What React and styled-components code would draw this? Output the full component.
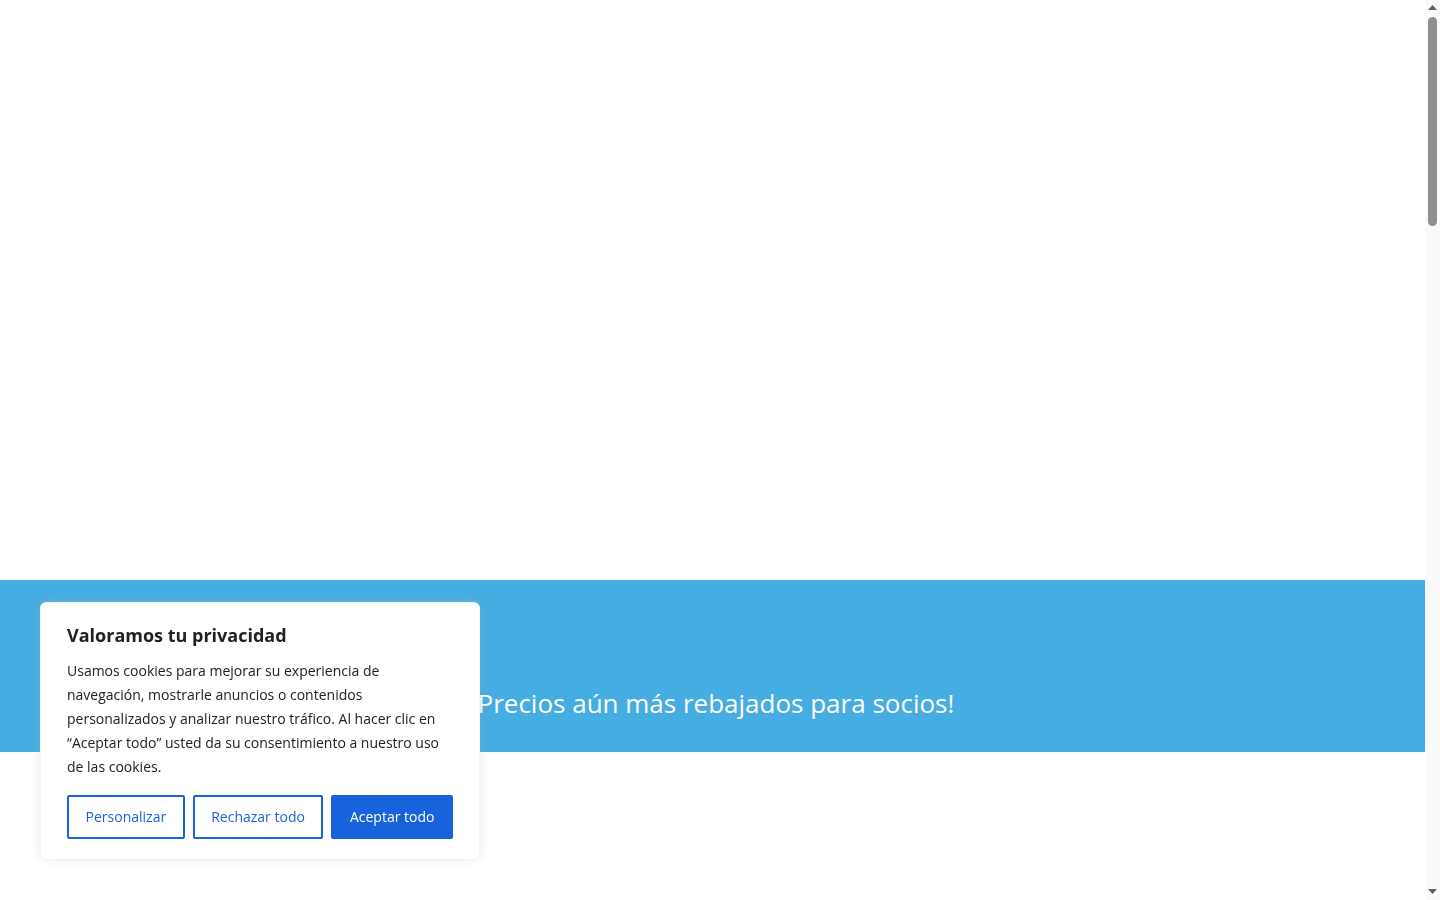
import React from "react";
import styled, { createGlobalStyle } from "styled-components";

const Global = createGlobalStyle`
  html, body { margin: 0; padding: 0; background: #ffffff; overflow: hidden; }
  body { font-family: "Open Sans", "Noto Sans", sans-serif; }
  * { box-sizing: border-box; }
`;

const Frame = styled.div`
  display: flex;
  height: 100vh;
`;

const Main = styled.main`
  flex: 1;
  min-width: 0;
  overflow: hidden;
  display: flex;
  flex-direction: column;
`;

const Rail = styled.div`
  width: 15px;
  flex: none;
  background: #fafafa;
  display: flex;
  flex-direction: column;
  align-items: center;
  padding: 5px 0 6px;
`;

const Thumb = styled.div`
  width: 9px;
  height: 209px;
  margin-top: 7px;
  border-radius: 5px;
  background: #8f8f8f;
`;

const Spacer = styled.div`
  flex: 1;
`;

const Hero = styled.div`
  height: 580px;
  flex: none;
  background: #ffffff;
`;

const Band = styled.section`
  background: #45ade2;
  height: 172px;
  flex: none;
  padding-top: 104px;
  display: flex;
  justify-content: center;
`;

const BandText = styled.h2`
  margin: 0;
  color: #ffffff;
  font-family: "Open Sans", sans-serif;
  font-weight: 400;
  font-size: 26px;
  line-height: 39px;
`;

const Consent = styled.div`
  position: fixed;
  left: 40px;
  bottom: 40px;
  width: 440px;
  background: #ffffff;
  border: 1px solid #f4f4f4;
  border-radius: 6px;
  padding: 20px 26px;
  box-shadow: 0 -1px 10px 0 rgba(172, 171, 171, 0.3);
  font-family: "Open Sans", sans-serif;
`;

const Title = styled.p`
  margin: 0 0 12px 0;
  color: #212121;
  font-weight: 700;
  font-size: 18px;
  line-height: 24px;
`;

const Desc = styled.p`
  margin: 0;
  color: #212121;
  font-size: 14px;
  line-height: 24px;
`;

const Buttons = styled.div`
  display: flex;
  margin-top: 16px;
  gap: 8px;
`;

const Btn = styled.button`
  flex: auto;
  font-family: "Open Sans", sans-serif;
  font-size: 14px;
  line-height: 24px;
  font-weight: 400;
  padding: 8px;
  border-radius: 2px;
  border: 2px solid #1863dc;
  cursor: pointer;
  color: ${(p) => (p.$primary ? "#ffffff" : "#1863dc")};
  background: ${(p) => (p.$primary ? "#1863dc" : "transparent")};
`;

const Arrow = ({ down }) => (
  <svg width="9" height="5" viewBox="0 0 9 5" style={{ display: "block" }}>
    <polygon
      points={down ? "0,0 9,0 4.5,5" : "0,5 9,5 4.5,0"}
      fill="#606060"
    />
  </svg>
);

export default function App() {
  return (
    <>
      <Global />
      <Frame>
        <Main>
          <Hero />
          <Band>
            <BandText>¡Precios aún más rebajados para socios!</BandText>
          </Band>
        </Main>
        <Rail>
          <Arrow />
          <Thumb />
          <Spacer />
          <Arrow down />
        </Rail>
      </Frame>
      <Consent>
        <Title>Valoramos tu privacidad</Title>
        <Desc>
          Usamos cookies para mejorar su experiencia de navegación, mostrarle
          anuncios o contenidos personalizados y analizar nuestro tráfico. Al
          hacer clic en “Aceptar todo” usted da su consentimiento a nuestro uso
          de las cookies.
        </Desc>
        <Buttons>
          <Btn>Personalizar</Btn>
          <Btn>Rechazar todo</Btn>
          <Btn $primary>Aceptar todo</Btn>
        </Buttons>
      </Consent>
    </>
  );
}
